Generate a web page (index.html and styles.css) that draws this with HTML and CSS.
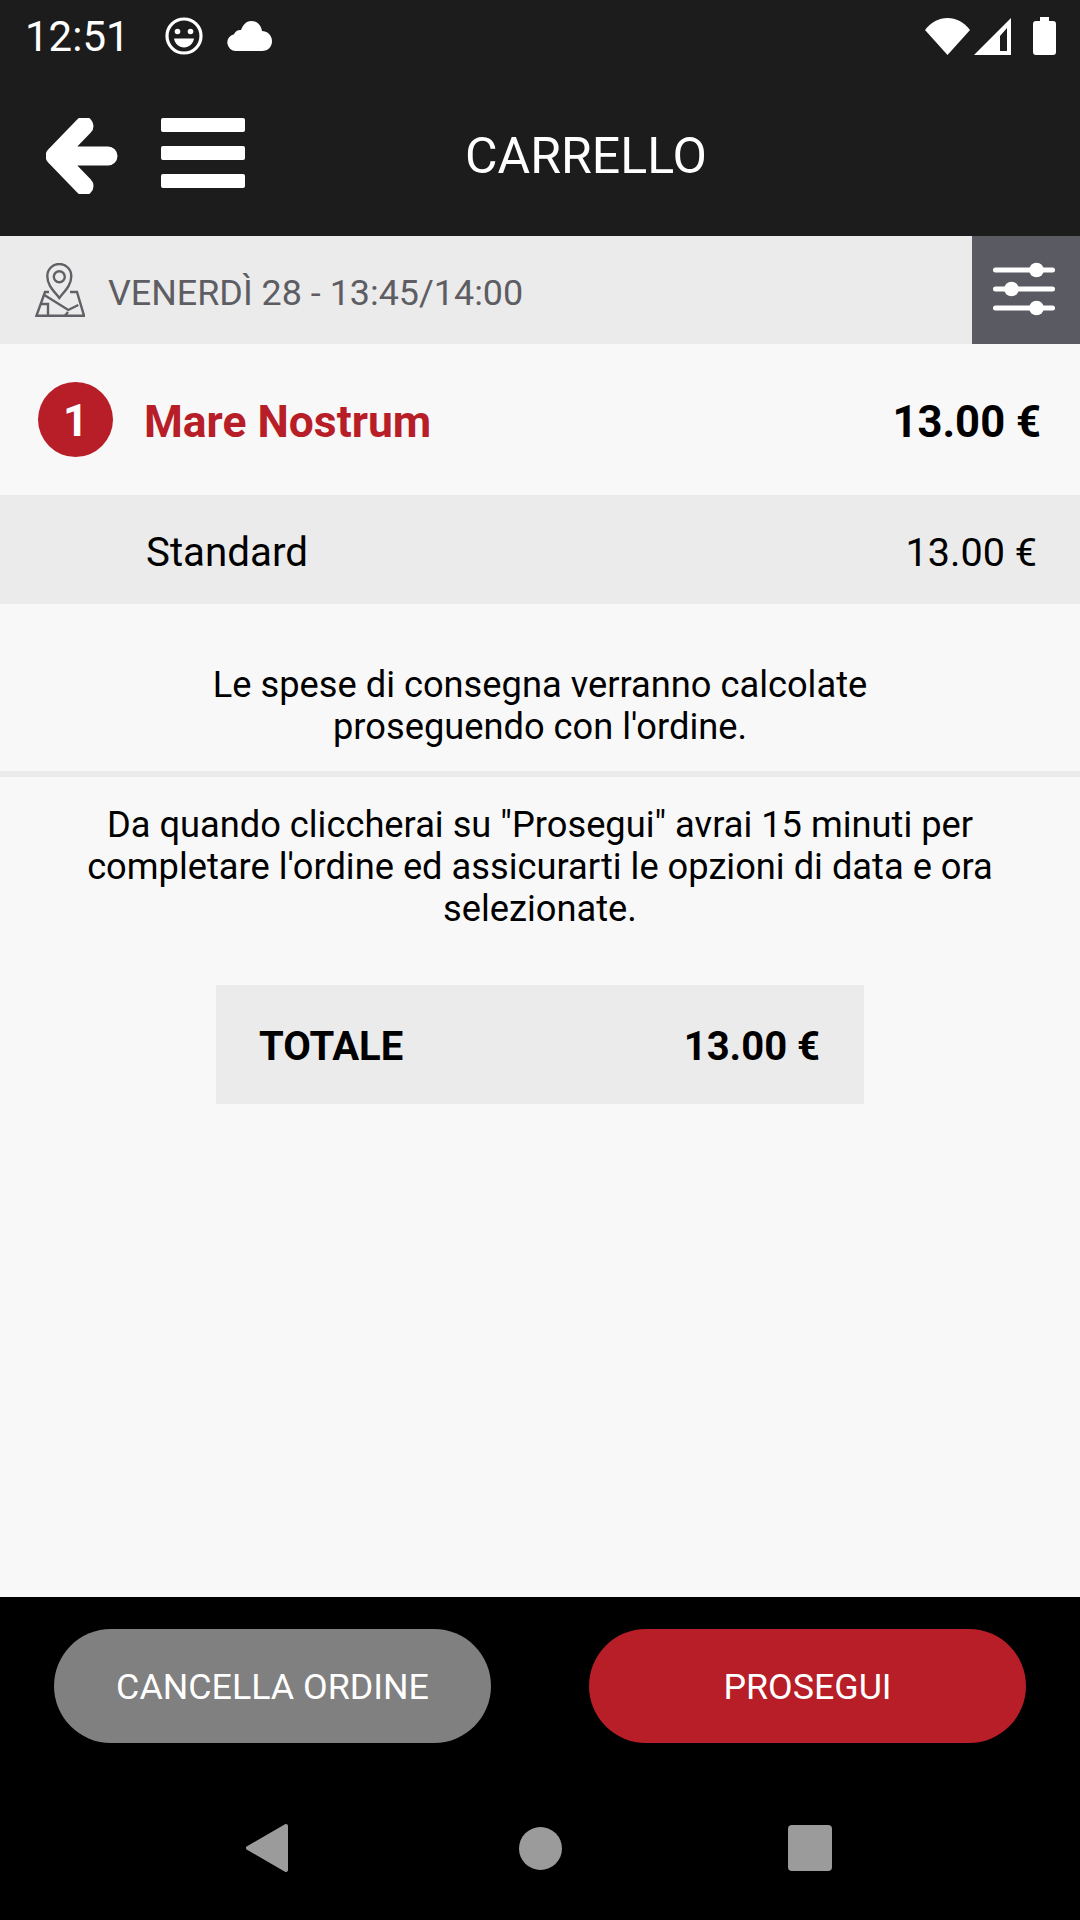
FILE: index.html
```html
<!DOCTYPE html>
<html lang="it">
<head>
  <meta charset="UTF-8">
  <title>Carrello</title>
  <link rel="stylesheet" href="styles.css">
</head>
<body>

  <div class="screen">
    <div class="status-bar">
      <span class="clock">12:51</span>
      <svg class="smile-icon" width="38" height="38" viewBox="0 0 38 38">
        <circle cx="19" cy="19" r="17" fill="none" stroke="#fff" stroke-width="3.200"/>
        <circle cx="12.500" cy="14.500" r="2.800" fill="#fff"/>
        <circle cx="25.500" cy="14.500" r="2.800" fill="#fff"/>
        <path d="M9 21.500h20c-1 5.500-5 9-10 9s-9-3.500-10-9z" fill="#fff"/>
      </svg>
      <svg class="cloud-icon" width="45" height="30" viewBox="0 0 45 30">
        <path d="M9 30a8.500 8.500 0 0 1-2-16.800C9 9.500 11 9 14 9c2-5 5-9 10-9 6 0 10 4 11 10 5 0 10 4 10 10s-4 10-10 10z" fill="#fff"/>
      </svg>
      <div class="status-right">
        <svg width="45" height="37" viewBox="0 0 45 37">
          <path d="M0 12C6 4 14 0 22.500 0S39 4 45 12L22.500 37z" fill="#fff"/>
        </svg>
        <svg width="37" height="37" viewBox="0 0 37 37">
          <path fill-rule="evenodd" d="M37 0v37H0zM33 10l-7 8v15h7z" fill="#fff"/>
        </svg>
        <svg width="23" height="38" viewBox="0 0 23 38">
          <path d="M7 0h9v4h4a3 3 0 0 1 3 3v28a3 3 0 0 1-3 3H3a3 3 0 0 1-3-3V7a3 3 0 0 1 3-3h4z" fill="#fff"/>
        </svg>
      </div>
    </div>

    <div class="app-bar">
      <svg class="back-icon" width="72" height="76" viewBox="0 0 72 76">
        <path d="M38 8L9 38l29 30M12 38h50" fill="none" stroke="#fff" stroke-width="19" stroke-linecap="round" stroke-linejoin="round"/>
      </svg>
      <div class="menu-icon">
        <span></span>
        <span></span>
        <span></span>
      </div>
      <h1 class="page-title">CARRELLO</h1>
    </div>

    <div class="date-bar">
      <svg class="map-icon" width="50" height="54" viewBox="0 0 50 54">
        <g fill="none" stroke="#606066" stroke-width="2.400">
          <path d="M24.300 35C18 27 12.300 22 12.300 13a12 12 0 0 1 24 0c0 9-5.700 14-12 22z"/>
          <circle cx="24.300" cy="13.700" r="5.500"/>
          <path d="M14 29h-4L1.500 52.700H49L42 29h-7"/>
          <path d="M9.300 32l24 15 10-5M5 41h8v11.700M33 49l-3 3.700"/>
        </g>
      </svg>
      <span class="date-text">VENERDÌ 28 - 13:45/14:00</span>
      <div class="filter-btn">
        <svg width="62" height="54" viewBox="0 0 62 54">
          <g stroke="#fff" stroke-width="5" stroke-linecap="round">
            <path d="M2.500 8h57M2.500 27h57M2.500 46h57"/>
          </g>
          <circle cx="43.500" cy="8" r="7.300" fill="#fff"/>
          <circle cx="18.500" cy="27" r="7.300" fill="#fff"/>
          <circle cx="43.500" cy="46" r="7.300" fill="#fff"/>
        </svg>
      </div>
    </div>

    <div class="item-row">
      <span class="item-qty">1</span>
      <span class="item-name">Mare Nostrum</span>
      <span class="item-price">13.00 €</span>
    </div>

    <div class="variant-row">
      <span class="variant-name">Standard</span>
      <span class="variant-price">13.00 €</span>
    </div>

    <p class="note delivery-note">Le spese di consegna verranno calcolate<br>proseguendo con l'ordine.</p>
    <p class="note timer-note">Da quando cliccherai su "Prosegui" avrai 15 minuti per<br>completare l'ordine ed assicurarti le opzioni di data e ora<br>selezionate.</p>

    <div class="total-box">
      <span>TOTALE</span>
      <span>13.00 €</span>
    </div>

    <div class="footer">
      <div class="actions">
        <button class="action-btn cancel-btn">CANCELLA ORDINE</button>
        <button class="action-btn next-btn">PROSEGUI</button>
      </div>
      <div class="nav-bar">
        <svg width="44" height="50" viewBox="0 0 44 50">
          <path d="M40 3L2 25l38 22z" fill="#9b9b9b" stroke="#9b9b9b" stroke-width="4" stroke-linejoin="round"/>
        </svg>
        <span class="nav-home"></span>
        <span class="nav-recent"></span>
      </div>
    </div>
  </div>

</body>
</html>
```

FILE: styles.css
```css
* {
  box-sizing: border-box;
}
body {
  margin: 0;
  font-family: Roboto, sans-serif;
  background: #f8f8f8;
}
.screen {
  width: 1080px;
  height: 1920px;
  display: flex;
  flex-direction: column;
  overflow: hidden;
}

/* top bars */
.status-bar {
  height: 72px;
  padding: 0 24px 0 25px;
  display: flex;
  align-items: center;
  background: #1c1c1c;
  color: #fff;
}
.clock {
  font-size: 42px;
  width: 140px;
}
.cloud-icon {
  margin-left: 24px;
}
.status-right {
  margin-left: auto;
  display: flex;
  align-items: center;
  gap: 4px;
}
.status-right svg:last-child {
  margin-left: 18px;
}
.app-bar {
  height: 164px;
  padding-left: 46px;
  display: flex;
  align-items: center;
  background: #1c1c1c;
}
.back-icon {
  margin-top: 4px;
}
.menu-icon {
  margin: 0 0 2px 43px;
  display: flex;
  flex-direction: column;
  gap: 14px;
}
.menu-icon span {
  display: block;
  width: 84px;
  height: 14px;
  border-radius: 2px;
  background: #fff;
}
.page-title {
  margin: 3px 0 0 220px;
  font-size: 50px;
  font-weight: 400;
  color: #fff;
}

/* delivery slot */
.date-bar {
  height: 108px;
  padding-left: 35px;
  display: flex;
  align-items: center;
  background: #ebebeb;
  color: #5d5d63;
}
.date-text {
  margin: 5px 0 0 23px;
  font-size: 35.9px;
}
.filter-btn {
  margin-left: auto;
  width: 108px;
  height: 108px;
  padding: 0 5px 2px 0;
  display: flex;
  align-items: center;
  justify-content: center;
  background: #5a5a62;
}

/* cart rows */
.item-row {
  height: 151px;
  padding: 0 39px 0 38px;
  display: flex;
  align-items: center;
  font-size: 44px;
  font-weight: 700;
}
.item-qty {
  width: 75px;
  height: 75px;
  margin-right: 31px;
  padding-top: 2px;
  display: flex;
  align-items: center;
  justify-content: center;
  border-radius: 50%;
  background: #b71e27;
  color: #fff;
}
.item-name {
  margin-top: 4px;
  font-size: 44.4px;
  color: #b71e27;
}
.item-price {
  margin: 5px 0 0 auto;
  font-size: 43.6px;
  color: #000;
}
.variant-row {
  height: 109px;
  padding: 5px 43px 0 146px;
  display: flex;
  align-items: center;
  justify-content: space-between;
  background: #ebebeb;
}
.variant-name {
  font-size: 40.3px;
}
.variant-price {
  font-size: 39.6px;
}

/* notes */
.note {
  margin: 0;
  text-align: center;
  font-size: 36.25px;
  line-height: 42px;
}
.delivery-note {
  padding: 60px 0 23px;
  border-bottom: 6px solid #ebebeb;
}
.timer-note {
  padding-top: 27px;
}
.total-box {
  width: 648px;
  height: 119px;
  margin: 55px auto 0;
  padding: 3px 44px 0 43px;
  display: flex;
  align-items: center;
  justify-content: space-between;
  background: #ebebeb;
  font-size: 40px;
  font-weight: 700;
}

/* bottom area */
.footer {
  margin-top: auto;
  height: 323px;
  background: #000;
}
.actions {
  padding: 32px 54px 0;
  display: flex;
  justify-content: space-between;
}
.action-btn {
  width: 437px;
  height: 114px;
  padding-top: 3px;
  border: none;
  border-radius: 57px;
  font-family: inherit;
  font-size: 35.8px;
  color: #fff;
}
.cancel-btn {
  background: #808080;
}
.next-btn {
  background: #b71e27;
}
.nav-bar {
  margin-top: 80px;
  padding-left: 246px;
  display: flex;
  align-items: center;
}
.nav-home {
  width: 43px;
  height: 43px;
  margin-left: 229px;
  border-radius: 50%;
  background: #9b9b9b;
}
.nav-recent {
  width: 44px;
  height: 46px;
  margin-left: 226px;
  border-radius: 4px;
  background: #9b9b9b;
}
```
